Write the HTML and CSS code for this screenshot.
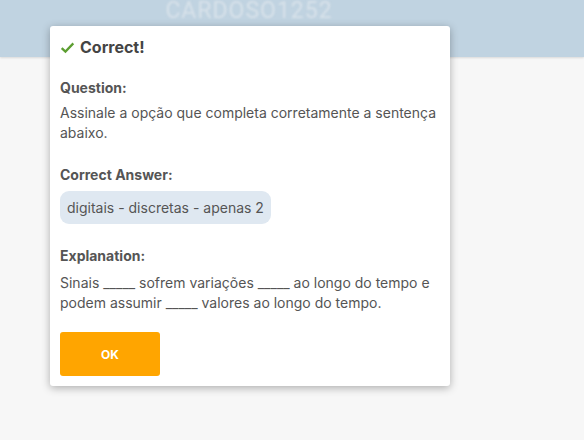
FILE: index.html
```html
<!DOCTYPE html>
<html>
<head>
<meta charset="utf-8">
<link rel="stylesheet" href="styles.css">
</head>
<body>
<div class="page">
  <header class="topbar"><span class="brand">CARDOSO1252</span></header>
  <main class="content"></main>
</div>
<div class="modal">
  <h2 class="modal-title">
    <svg class="check" viewBox="0 0 16 16" width="15" height="15"><path d="M1.8 8.6 L5.8 12.4 L14.2 3.6" fill="none" stroke="#5c9e31" stroke-width="2.4" stroke-linecap="butt" stroke-linejoin="miter"/></svg>
    Correct!
  </h2>
  <section class="block">
    <h3 class="label">Question:</h3>
    <p class="text">Assinale a opção que completa corretamente a sentença abaixo.</p>
  </section>
  <section class="block">
    <h3 class="label">Correct Answer:</h3>
    <span class="pill">digitais - discretas - apenas 2</span>
  </section>
  <section class="block">
    <h3 class="label">Explanation:</h3>
    <p class="text text-expl">Sinais _____ sofrem variações _____ ao longo do tempo e podem assumir _____ valores ao longo do tempo.</p>
  </section>
  <button class="ok">OK</button>
</div>
</body>
</html>
```
FILE: styles.css
```css
* { box-sizing: border-box; }
html, body { margin: 0; padding: 0; }
body {
  width: 584px;
  height: 440px;
  overflow: hidden;
  background: #f7f7f7;
  font-family: Inter, "Noto Sans", sans-serif;
  position: relative;
}
.page { display: flex; flex-direction: column; height: 100%; }
.topbar {
  height: 57px;
  background: #c0d3e1;
  box-shadow: 0 1px 2px rgba(0,0,0,0.12);
  display: flex;
  justify-content: center;
  align-items: flex-start;
}
.brand {
  font-family: Roboto, sans-serif;
  font-size: 23px;
  line-height: 24px;
  letter-spacing: 1px;
  color: #d8e2ea;
  filter: blur(0.9px);
  margin-left: -86px;
  margin-top: -1px;
}
.content { flex: 1; }
.modal {
  position: absolute;
  left: 50px;
  top: 26px;
  width: 400px;
  height: 360px;
  background: #fff;
  border-radius: 3px;
  box-shadow: 0 2px 8px rgba(0,0,0,0.3);
  padding: 12px 10px 10px 10px;
  color: #555;
}
.modal-title {
  margin: 0;
  display: flex;
  align-items: center;
  gap: 5px;
  font-size: 16px;
  font-weight: 700;
  color: #444;
  line-height: 18px;
}
.check { flex: none; }
.block { margin-top: 23px; }
.label {
  margin: 0;
  font-size: 14px;
  font-weight: 700;
  color: #555;
  line-height: 18px;
}
.text {
  margin: 6px 0 0;
  font-size: 14px;
  line-height: 20px;
  color: #555;
  padding-right: 2px;
}
.text-expl { margin-top: 8px; }
.pill {
  display: inline-block;
  margin-top: 7px;
  background: #dfe8f1;
  border-radius: 9px;
  padding: 0 7px;
  height: 33px;
  line-height: 33px;
  font-size: 14px;
  color: #555;
}
.ok {
  display: block;
  margin-top: 19px;
  width: 100px;
  height: 44px;
  background: #ffa500;
  border: none;
  border-radius: 3px;
  color: #fff;
  font-family: Inter, sans-serif;
  font-weight: 700;
  font-size: 12px;
}
```
